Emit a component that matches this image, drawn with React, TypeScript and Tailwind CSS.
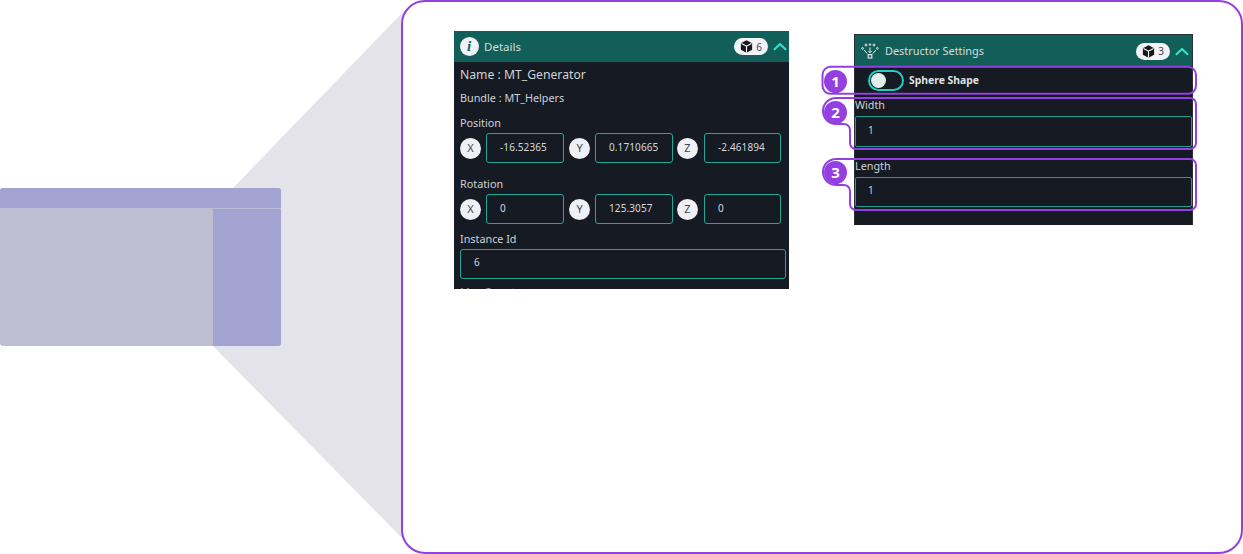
import React from 'react';

const font = { fontFamily: '"Noto Sans", "Open Sans", sans-serif' };

function CubeIcon() {
  return (
    <svg width="13" height="13" viewBox="0 0 12 12">
      <path d="M6 .2 11.2 3v6L6 11.8.8 9V3z" fill="#15191f" />
      <path d="M1.4 3.2 6 5.7l4.6-2.5M6 5.7v6" stroke="#fff" strokeWidth="1" fill="none" />
    </svg>
  );
}

function Chevron() {
  return (
    <svg width="14" height="9" viewBox="0 0 14 9" fill="none">
      <path d="M1.5 7.2 7 2l5.5 5.2" stroke="#2fe6d2" strokeWidth="2" strokeLinecap="round" strokeLinejoin="round" />
    </svg>
  );
}

function CountBadge({ n }: { n: number }) {
  return (
    <div className="flex h-[17px] w-[34px] items-center justify-center gap-[3px] rounded-full bg-[#f3f4f8]">
      <CubeIcon />
      <span className="text-[10px] leading-none text-[#3f4652]">{n}</span>
    </div>
  );
}

function InfoIcon() {
  return (
    <div className="flex h-[19px] w-[19px] items-center justify-center rounded-full bg-[#f1f3f6]">
      <span className="text-[15px] font-bold italic leading-none text-[#125f59]" style={{ fontFamily: '"Liberation Serif", serif' }}>i</span>
    </div>
  );
}

function DestructorIcon() {
  return (
    <svg width="18" height="16" viewBox="0 0 18 16" fill="none" stroke="#dfe7e6" strokeWidth="1">
      <circle cx="5" cy="2" r="1" />
      <circle cx="9" cy="1.6" r="0.8" />
      <circle cx="13" cy="2" r="1" />
      <circle cx="1.6" cy="5.4" r="0.9" />
      <circle cx="16.4" cy="5.4" r="0.9" />
      <path d="M9 4.5v5M7.4 8 9 9.8 10.6 8M3.2 7l3 3.6M14.8 7l-3 3.6" />
      <rect x="7.2" y="11.6" width="3.6" height="3.4" strokeWidth="1.2" />
    </svg>
  );
}

function Axis({ label }: { label: string }) {
  return (
    <div className="flex h-[21px] w-[21px] shrink-0 items-center justify-center rounded-full bg-[#eef0f6] text-[11px] text-[#3f4652]">
      {label}
    </div>
  );
}

function Value({ value, narrow }: { value: string; narrow?: boolean }) {
  return (
    <div className={`flex h-[30px] shrink-0 items-center rounded-[3px] border-[1.5px] border-[#1fa89a] pb-[1px] pl-[13px] text-[10px] tracking-[0.1px] text-[#d5d8dc] ${narrow ? 'w-[77px]' : 'w-[78px]'}`}>
      {value}
    </div>
  );
}

function VectorRow({ values }: { values: string[] }) {
  return (
    <div className="mt-[2px] flex items-center">
      <Axis label="X" />
      <div className="ml-[5px]"><Value value={values[0]} /></div>
      <div className="ml-[5px]"><Axis label="Y" /></div>
      <div className="ml-[5px]"><Value value={values[1]} /></div>
      <div className="ml-[4px]"><Axis label="Z" /></div>
      <div className="ml-[6px]"><Value value={values[2]} narrow /></div>
    </div>
  );
}

function Header({ icon, title, count, className, titleClass }: { icon: React.ReactNode; title: string; count: number; className: string; titleClass: string }) {
  return (
    <div className={`flex h-[31px] items-center bg-[#125f59] ${className}`}>
      <div className="flex w-[30px] justify-center">{icon}</div>
      <span className={`text-[#d3dddc] ${titleClass}`}>{title}</span>
      <div className="ml-auto flex items-center gap-[5px]">
        <CountBadge n={count} />
        <Chevron />
      </div>
    </div>
  );
}

function DetailsPanel() {
  return (
    <div className="h-[258px] w-[335px] shrink-0 overflow-hidden bg-[#151a23] text-[#cfd3d6]">
      <Header icon={<InfoIcon />} title="Details" count={6} className="pr-[2px]" titleClass="text-[11.5px]" />
      <div className="pl-[6px]">
        <div className="mt-[4px] h-[18px] text-[12.2px] leading-[18px]">Name : MT_Generator</div>
        <div className="mt-[6px] h-[16px] text-[10.8px] leading-[16px]">Bundle : MT_Helpers</div>
        <div className="mt-[9px] h-[16px] text-[10.8px] leading-[16px]">Position</div>
        <VectorRow values={['-16.52365', '0.1710665', '-2.461894']} />
        <div className="mt-[13px] h-[16px] text-[10.8px] leading-[16px]">Rotation</div>
        <VectorRow values={['0', '125.3057', '0']} />
        <div className="mt-[7px] h-[16px] text-[10.8px] leading-[16px]">Instance Id</div>
        <div className="mt-[2px] flex h-[30px] w-[326px] items-center rounded-[3px] border-[1.5px] border-[#1fa89a] pb-[3px] pl-[13px] text-[10px] text-[#d5d8dc]">6</div>
        <div className="mt-[5px] h-[16px] text-[10.8px] leading-[16px] text-[#8f949a]">Max Count</div>
      </div>
    </div>
  );
}

function Field({ label, className, inputClass }: { label: string; className: string; inputClass: string }) {
  return (
    <div className={className}>
      <div className="h-[16px] text-[10.8px] leading-[16px] text-[#cfd3d6]">{label}</div>
      <div className={`mt-[3px] flex w-[337px] items-center rounded-[2px] border-[1.5px] border-[#1f9c90] pl-[12px] text-[10px] text-[#cfd3d6] ${inputClass}`}>1</div>
    </div>
  );
}

function DestructorPanel() {
  return (
    <div className="mt-[3px] h-[191px] w-[339px] shrink-0 border-x border-t border-[#2a2f38] bg-[#151a23]">
      <Header icon={<DestructorIcon />} title="Destructor Settings" count={3} className="pt-[1px] pr-[3px]" titleClass="text-[10.9px]" />
      <div className="mt-[4px] flex h-[21px] items-center pl-[13px]">
        <div className="flex h-[21px] w-[36px] items-center rounded-full border-2 border-[#20cfc0] pl-[1px]">
          <div className="h-[15px] w-[15px] rounded-full bg-[#e0efec]" />
        </div>
        <span className="ml-[5px] text-[10.4px] font-bold text-[#dfe2e5]">Sphere Shape</span>
      </div>
      <Field label="Width" className="mt-[6px]" inputClass="h-[31px] pb-[2px]" />
      <Field label="Length" className="mt-[11px]" inputClass="h-[30px] pb-[3px]" />
    </div>
  );
}

function Thumbnail() {
  return (
    <div className="relative z-10 mt-[188px] flex h-[158px] w-[281px] flex-col overflow-hidden rounded-[3px] bg-[#bfbed0]">
      <div className="h-[21px] border-b border-[#bcbcd6] bg-[#a3a3d1]" />
      <div className="flex flex-1 justify-end">
        <div className="w-[68px] bg-[#a3a3d1]" />
      </div>
    </div>
  );
}

function Wedge() {
  return (
    <svg className="absolute inset-0" width="1243" height="554">
      <polygon points="233,188 404,11 404,540 213,346" fill="#e3e3e9" />
    </svg>
  );
}

function Callouts() {
  const purple = '#9440e0';
  const items = [
    { n: 1, cy: 81 },
    { n: 2, cy: 112 },
    { n: 3, cy: 172 },
  ];
  return (
    <>
      <svg className="pointer-events-none absolute inset-0 z-20" width="1243" height="554" fill="none" stroke={purple} strokeWidth="2">
        <rect x="822.5" y="66.8" width="373.5" height="27" rx="8" />
        <path d="M836 98h354a6 6 0 0 1 6 6v39a6 6 0 0 1-6 6H856a6 6 0 0 1-6-6v-13a6 6 0 0 0-6-6h-8a13 13 0 0 1 0-26z" />
        <path d="M836 159h354a6 6 0 0 1 6 6v39a6 6 0 0 1-6 6H856a6 6 0 0 1-6-6v-13a6 6 0 0 0-6-6h-8a13 13 0 0 1 0-26z" />
      </svg>
      {items.map((item) => (
        <div
          key={item.n}
          className="absolute z-30 flex h-[23px] w-[23px] items-center justify-center rounded-full bg-[#9440e0] text-[15px] font-bold leading-none text-white"
          style={{ left: 824, top: item.cy - 11.5 }}
        >
          {item.n}
        </div>
      ))}
    </>
  );
}

export default function App() {
  return (
    <div className="relative flex h-[554px] w-[1243px] overflow-hidden bg-white" style={font}>
      <Wedge />
      <div className="w-[401px] shrink-0">
        <Thumbnail />
      </div>
      <div className="relative z-10 flex h-[554px] w-[842px] items-start gap-[65px] rounded-[24px] border-2 border-[#9440e0] bg-white pl-[51px] pt-[29px]">
        <DetailsPanel />
        <DestructorPanel />
      </div>
      <Callouts />
    </div>
  );
}
